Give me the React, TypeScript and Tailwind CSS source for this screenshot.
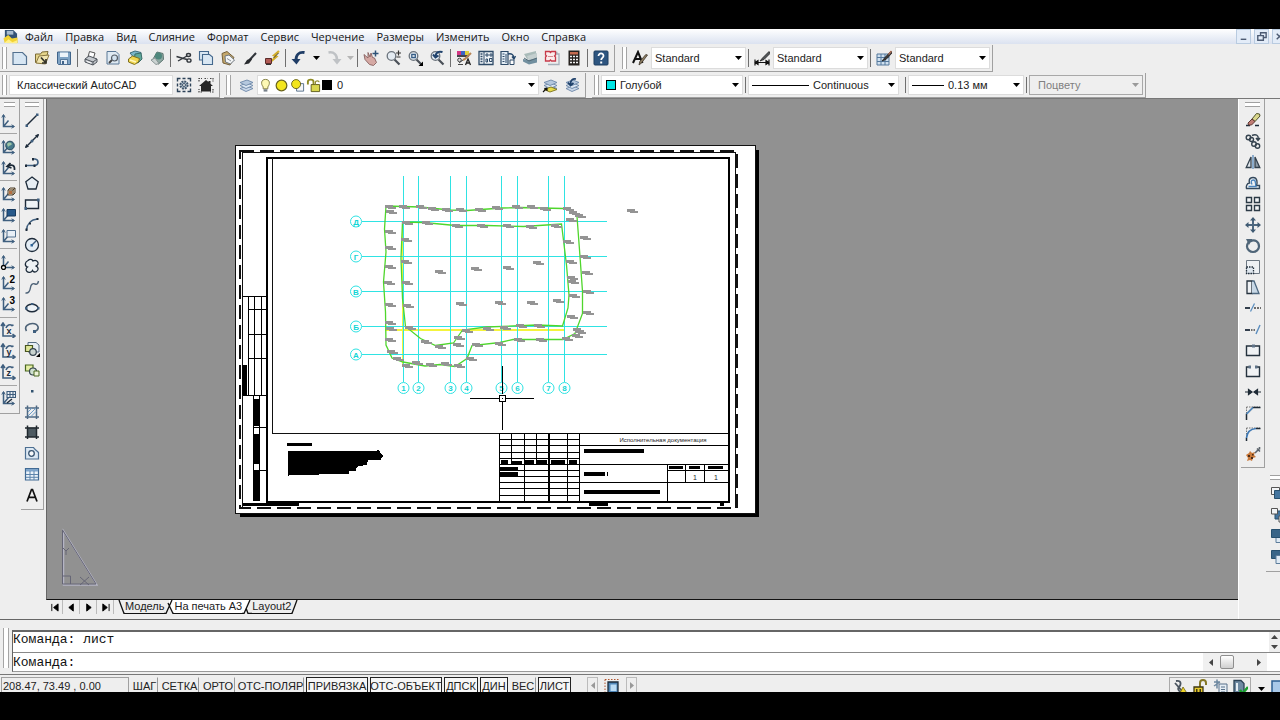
import React from 'react';

type Art = Record<string, React.ReactNode>;

const steel = '#3f5f7f';
const ink = '#1d2b3a';

const axes = (
  <g fill="none" stroke={steel} strokeWidth="1.5">
    <path d="M3.5 2v11.5H14M3.5 13.5l5-6" />
    <path d="M1.8 4.5 3.5 1.5l1.7 3M11.5 11.8l3 1.7-3 1.7" strokeWidth="1" />
  </g>
);

const layers = (
  <g stroke="#6c87a8" strokeWidth=".9">
    <path d="M2 11.5 9 9l6 2.500-7 3z" fill="#c8d6e8" />
    <path d="M2 8.500 9 6l6 2.500-7 3z" fill="#dbe6f2" />
    <path d="M2 5.500 9 3l6 2.500-7 3z" fill="#b5c8de" />
  </g>
);

const axisLetter = (c: string) => (
  <>
    <g fill="none" stroke={steel} strokeWidth="1.6">
      <path d="M3 2v12h12M1 4l2-3 2 3M12.500 12l2.500 2-2.500 2M6 6c1-3 4-4 6-2.500l1.500-.5" />
    </g>
    <text x="6.500" y="12" fontSize="9" fontWeight="700" fontFamily="Liberation Sans, sans-serif" fill={ink}>{c}</text>
  </>
);

const lens = (
  <>
    <path d="m9.500 9.500 5 5" stroke="#4a5058" strokeWidth="2.200" />
    <circle cx="6.500" cy="6" r="4.300" fill="#e4ebf2" stroke="#6b737c" strokeWidth="1.300" />
  </>
);

const art: Art = {
  new: <path d="M1 2.500h9.500l4 4v8H1z" fill="#d7e6f3" stroke="#53718f" strokeWidth="1.200" />,
  open: (
    <>
      <path d="M1.500 4h5l1.500-2 6-.5-1 4-2.500 8-9-1z" fill="#e5d58b" stroke="#7a6a35" />
      <path d="m5 6 10-1-3.500 9L2 13z" fill="#f1e6b1" stroke="#8b7840" />
      <path d="m7 7.500 5 5.500M12 9v4H8" fill="none" stroke="#33332a" strokeWidth="1.700" />
    </>
  ),
  save: (
    <>
      <path d="M1.500 2h13v12.500h-12l-1-1z" fill="#7fa3c4" stroke="#40648a" />
      <path d="M4 2.500h8V7H4z" fill="#eef4fa" />
      <path d="M4.500 9.500h7v5h-7z" fill="#dfe9f3" stroke="#40648a" strokeWidth=".8" />
      <path d="M6 11h2v3H6z" fill="#40648a" />
    </>
  ),
  print: (
    <>
      <path d="M5 7 6.500 1.500 12 3l-1.500 5" fill="#fff" stroke="#555" />
      <path d="m2 9 4-3 8 3v3l-4 3-8-3z" fill="#c4c8cd" stroke="#4d535a" />
      <path d="m2 9 8 3 4-3M10 12v3" fill="none" stroke="#4d535a" />
      <path d="m4 11.500 4 1.500" stroke="#fff" />
    </>
  ),
  preview: (
    <>
      <path d="M2 1.500h9l3 3V14H2z" fill="#dfeaf3" stroke="#5a7896" />
      <path d="m4 13 3-3" stroke="#444" strokeWidth="2" />
      <circle cx="9.500" cy="8" r="3" fill="#d2e2ef" stroke="#555e68" strokeWidth="1.200" />
    </>
  ),
  publish: (
    <>
      <path d="M3 3 8 1l6 1.500-1 5L8 9z" fill="#79b6c9" stroke="#3c6c7c" />
      <path d="m8 4 6-1 1 6-4 4-4-2z" fill="#5ea79a" stroke="#3a6c68" />
      <path d="m1.500 9 4-3 7 2.500-1 3.500-4 2.500-6-2.500z" fill="#f0d64f" stroke="#80701d" />
      <path d="m3 10 6 2" stroke="#fff6bd" strokeWidth="1.500" />
    </>
  ),
  dwf: (
    <>
      <path d="m8 2 6 1.500.5 6-5 4.500-6-4z" fill="#8fa9a3" stroke="#5d7570" />
      <circle cx="9.500" cy="6" r="3.500" fill="#4e877c" />
      <path d="m2 10 4-2 4 5.500-3 1z" fill="#cbd3d2" stroke="#8a9696" />
    </>
  ),
  cut: (
    <g fill="none" stroke="#31363c" strokeWidth="1.400">
      <path d="M.5 6.500 11 9.500M2 11l9-5" />
      <ellipse cx="12.500" cy="5" rx="2" ry="1.500" />
      <ellipse cx="13" cy="10.500" rx="2" ry="1.600" />
    </g>
  ),
  copy: (
    <g fill="#d9e7f3" stroke="#44688d" strokeWidth="1.100">
      <path d="M1.500 1.500h9V10h-9z" />
      <path d="M4.500 4.500h7l3 2.500v7.500h-10z" />
    </g>
  ),
  paste: (
    <>
      <path d="m2 3.500 5-2 7 6L10 15l-7-2z" fill="#c4a76b" stroke="#75603a" />
      <path d="m5 6 4-1 5.500 5-4 4-5-2z" fill="#f3f5f6" stroke="#6f7780" />
      <path d="m7 8.500 4 2.500" stroke="#8c949c" />
    </>
  ),
  brush: (
    <>
      <path d="M14 3 8 9.500" stroke="#30343a" strokeWidth="2" />
      <path d="M9 8 5 10l-3 4.500 5-1 3-4z" fill="#272a2e" />
    </>
  ),
  match: (
    <>
      <path d="m15 1-5 4.500 2.500 1L7.500 11" fill="none" stroke="#d3ae2b" strokeWidth="2.200" />
      <path d="m14.500 3-5 5" stroke="#4a4021" strokeWidth="1" />
      <path d="M1.500 8.500h6v5h-6z" fill="#b05a55" stroke="#5c2c2a" />
      <path d="M2 14.500h5" stroke="#333" />
    </>
  ),
  undo: (
    <>
      <path d="M13.500 2.500C8 1.500 4.500 5 5 11" fill="none" stroke="#1f3d66" strokeWidth="2.800" />
      <path d="M.5 9h9L5.500 14.500z" fill="#1f3d66" />
    </>
  ),
  redo: (
    <>
      <path d="M2.500 2.500C8 1.500 11.500 5 11 11" fill="none" stroke="#bfc2c5" strokeWidth="2.400" />
      <path d="M6.500 9h9l-4.500 5.500z" fill="#bfc2c5" />
    </>
  ),
  pan: (
    <>
      <path d="M1 4.500 5 8V2.500l2 4.500 1-4 1.500 4.500 2 .5 2 4.500-3 3-4-1-4.500-5z" fill="#d5a9a4" stroke="#86605f" strokeWidth=".9" />
      <path d="M9.500 3.500h6M12.500.5v6" stroke="#2d5278" strokeWidth="1.500" />
    </>
  ),
  zoom: <>{lens}<path d="M11 3h5M13.500.5v5M11.500 7h4" stroke="#333" strokeWidth="1.200" /></>,
  zoomwin: (
    <>
      {lens}
      <path d="M4.800 4.500h3.500v3H4.800z" fill="#fff" stroke="#355d86" strokeWidth="1.300" />
      <path d="M16 11.500V16h-4.500z" fill="#000" />
    </>
  ),
  zoomprev: <>{lens}<path d="M13.500 2C10 1 7 2 6.500 6M4 4.500l2.500 3 3-2" fill="none" stroke="#1f416b" strokeWidth="2" /></>,
  props: (
    <>
      <path d="M1 1h4v4H1z" fill="#d33682" /><path d="M5 1h4v4H5z" fill="#3b64c8" />
      <path d="M9 1h4v4H9z" fill="#e0cf3b" /><path d="M1 5h12v2H1z" fill="#44434b" />
      <path d="m15 3-6 6-2 1" fill="none" stroke="#b78556" strokeWidth="2" />
      <circle cx="3.500" cy="10" r="1.800" fill="#ddd" stroke="#444" />
      <path d="M2 14.500h5M3 13l4-3" stroke="#444" />
      <path d="m9.500 15 2.500-6 2.500 6M10.500 13h3" fill="none" stroke="#222" strokeWidth="1.300" />
    </>
  ),
  design: (
    <>
      <path d="M1 1.500h14v13H1z" fill="#eef3f7" stroke="#2f4b68" strokeWidth="1.300" />
      <path d="M6 2v12.500" stroke="#2f4b68" />
      <path d="M2.500 4h2M2.500 6.500h2M2.500 9h2M2.500 11.500h2" stroke="#2f4b68" strokeWidth="1.300" />
      <path d="M8 4h2v2H8zM12 4h2v2h-2zM8 9h1.500v3H8zM11.500 8.500h2.500v3h-2.500z" fill="none" stroke="#2f4b68" />
    </>
  ),
  palette: (
    <>
      <path d="M1 1.500h7v13H1z" fill="#e3edf5" stroke="#2f4b68" strokeWidth="1.200" />
      <path d="M2.500 4h2M2.500 6.500h2M2.500 9h2M2.500 11.500h2M6 4v9" stroke="#2f4b68" />
      <path d="M8 4c4-1 5.500 1 6 4M12 6.500l2 2.500 1.500-3" fill="none" stroke="#26486c" strokeWidth="1.300" />
      <path d="M10 10h4v4.500h-4z" fill="#fff" stroke="#2f4b68" />
    </>
  ),
  sheets: (
    <>
      <path d="m2 4 12-3v5l-9 3z" fill="#a9bbb9" />
      <path d="m5 6 10-3v5l-8 3z" fill="#c4cfcf" />
      <path d="m1 9 6 1 8-2v4.500l-8 2-6-3z" fill="#718f9f" />
      <path d="m2 8 5 3 8-3" fill="none" stroke="#546b78" />
    </>
  ),
  markup: (
    <>
      <path d="M5 4h10v10.500H4M6.500 2.500h7" fill="none" stroke="#a6b0ba" strokeWidth="1.300" />
      <path d="M1.500 1.500h4l1 1 1-1h4v3.500l-1 1 1 1v4h-4l-1-1-1 1h-4v-4l1-1-1-1z" fill="#fbecec" stroke="#c73a49" strokeWidth="1.300" />
      <path d="M4 6.500h5" stroke="#d68a92" />
    </>
  ),
  calc: (
    <>
      <path d="M2.500.5h11v15h-11z" fill="#26221f" />
      <path d="M4 2h8v2.500H4z" fill="#c56b4f" />
      <path d="M4 6.500h8M4 9.500h8M4 12.500h8" stroke="#f2f2f2" strokeWidth="1.700" strokeDasharray="2 1" />
    </>
  ),
  help: (
    <>
      <rect x="1" y="1" width="14" height="14" rx="1" fill="#2d5580" stroke="#1e3e61" />
      <path d="M5.500 6c0-3.500 5.200-3.300 5 0-.2 2-2.300 1.800-2.300 4" fill="none" stroke="#fff" strokeWidth="1.800" />
      <path d="M7.200 11.500h2v2h-2z" fill="#fff" />
    </>
  ),
  textstyle: (
    <>
      <path d="M1 13 6 2l4.500 11M3 9h6" fill="none" stroke="#111" strokeWidth="2" />
      <path d="m15.500 5-6 8-2.500 2 .8-3.500 6-7z" fill="#8c7c62" stroke="#3c3529" strokeWidth=".8" />
    </>
  ),
  dimstyle: (
    <>
      <path d="M1 9.500v6M15 9.500v6M2 12.500h12M1 12.500l3-2v4zM15 12.500l-3-2v4z" fill="#111" stroke="#111" strokeWidth="1.200" />
      <path d="M15 1.500 8.500 8 6 11l4-1.500 6-6z" fill="#53575b" stroke="#222" strokeWidth=".8" />
    </>
  ),
  tablestyle: (
    <>
      <path d="M1 4h12v11H1z" fill="#cfe0ef" stroke="#54789c" />
      <path d="M1 7.500h12M1 11.500h12M5 4v11M9 4v11" stroke="#54789c" />
      <path d="M15 1 8.500 8 6 11l4-1.500L16 3z" fill="#3d3a38" stroke="#222" strokeWidth=".8" />
      <path d="m15.500 1-3 3.500" stroke="#b0715a" strokeWidth="1.500" />
    </>
  ),
  gear: (
    <>
      <path d="M1.500 4.500v-3h3M11.500 1.500h3v3M14.500 11.500v3h-3M4.500 14.500h-3v-3M6.500 1.500h3M6.500 14.500h3M1.500 6.500v3M14.500 6.500v3" fill="none" stroke="#2c4258" strokeWidth="1.400" />
      <circle cx="8" cy="8" r="3.600" fill="#b5c4d1" stroke="#41566b" strokeWidth="2" strokeDasharray="1.900 .9" />
      <circle cx="8" cy="8" r="1.500" fill="#eee" stroke="#41566b" />
    </>
  ),
  home: (
    <>
      <path d="M1 4.500V1.500h3M12 1.500h3v3M15 12v3h-3M4 15H1v-3M6.500 1.500h3" fill="none" stroke="#444" strokeWidth="1.200" strokeDasharray="1.500 1" />
      <path d="M8 3 1 9h2v5.500h10V9h2l-2.500-2.200V4h-2v1z" fill="#262626" />
    </>
  ),
  layers,
  layerprops: <>{layers}<path d="M2 12.500 9 10l6 2.500-7 2.500z" fill="#e7dc4b" stroke="#887e25" /><path d="m1 15 4-4M2.500 11.500H5v2.500" fill="none" stroke="#111" strokeWidth="1.100" /></>,
  layerprev: <>{layers}<path d="M12 2C8.500 1.500 6.500 3 6.500 7M4 5.500l2.500 3 3-2.500" fill="none" stroke="#1f416b" strokeWidth="1.700" /></>,
  bulb: (
    <>
      <path d="M8 1.500c-5 0-5 5-2.500 8v2h5v-2C13 6.500 13 1.500 8 1.500z" fill="#fdf9b4" stroke="#807c3f" />
      <path d="M6 12h4v2.500H6z" fill="#77808a" />
    </>
  ),
  sun: <circle cx="8" cy="8" r="5.700" fill="#f3e51d" stroke="#6a641c" strokeWidth="1.300" />,
  sunvp: <><path d="M7 6h7.500v8H7z" fill="#f4f6f8" stroke="#56708c" /><circle cx="6.500" cy="6.500" r="4.800" fill="#f3e51d" stroke="#6a641c" /></>,
  lock: (
    <>
      <path d="M2 7V4c0-3 6-3 6 0v3" fill="none" stroke="#8f8b24" strokeWidth="2" />
      <path d="M5.500 7h9v7.500h-9z" fill="#d9d74f" stroke="#5e5c1d" />
      <path d="M10 7V4.500c0-2 4-2 4 0" fill="none" stroke="#8f8b34" strokeWidth="1.300" />
    </>
  ),
  ucs: axes,
  ucsworld: <>{axes}<circle cx="10" cy="6.500" r="4.300" fill="#47798a" stroke="#28495c" /><path d="M7 5c2-2.500 4-1.500 5 0-1 2-3 1-4 3z" fill="#9dc5a6" /></>,
  ucsprev: <>{axes}<path d="M14.500 10C15 5.500 12 4 8.500 6M10.500 3 7 6.500l4.500 1.500" fill="none" stroke="#1c2a38" strokeWidth="1.700" /></>,
  ucsface: <>{axes}<path d="m8 4 2-2h5v5l-2 2H8z" fill="#e9d9bd" stroke="#4a3c2b" /><path d="M8 4h5v5M13 4l2-2" fill="none" stroke="#4a3c2b" /><path d="M9 5h3v3H9z" fill="#b46e40" /></>,
  ucsobject: <>{axes}<path d="M7 2.500h8.500v6.500H7z" fill="#27598a" stroke="#17395c" /></>,
  ucsview: <>{axes}<path d="M7 2.500h8.500v6.500H7z" fill="#e8eff6" stroke="#53718f" /></>,
  ucsorigin: <>{axes}<circle cx="3.500" cy="13.500" r="2" fill="#fff" stroke="#000" strokeWidth="1.300" /></>,
  ucsz: <>{axes}<text x="9.500" y="7.500" fontSize="10" fontWeight="700" fontFamily="Liberation Sans, sans-serif">2</text></>,
  ucs3: <>{axes}<text x="9.500" y="7.500" fontSize="10" fontWeight="700" fontFamily="Liberation Sans, sans-serif">3</text></>,
  ucsX: axisLetter('x'),
  ucsY: axisLetter('y'),
  ucsZ: axisLetter('z'),
  ucsapply: <>{axes}<path d="M7 1.500h8.500v6H7zM7 4.500h8.500M10 1.500v6M13 1.500v6" fill="#e9eff5" stroke="#3c5c7c" strokeWidth="1.100" /><path d="m7 13 5-4" stroke={ink} strokeWidth="1.500" /></>,
  line: <><path d="m2.500 13.500 11-11" stroke={ink} strokeWidth="1.400" /><path d="M1.500 12.500h2.500V15H1.500zM12 1.500h2.500V4H12z" fill={steel} /></>,
  xline: <><path d="m1.500 14.500 13-13" stroke={ink} strokeWidth="1.500" /><path d="m1 15 1.200-4L5 13.800zM15 1l-1.200 4L11 2.200z" fill={ink} /><circle cx="8" cy="8" r="1.500" fill={steel} /></>,
  pline: <><path d="M2 11.500h9c4-.5 4-6 0-6.500H9" fill="none" stroke={steel} strokeWidth="1.600" /><path d="M1 10.500h2v2.500H1zM8 4h2v2.500H8zM9.500 10.500h2v2.500h-2z" fill={ink} /></>,
  polygon: <path d="m8 2 6.200 4.800L12 14H4L1.800 6.800z" fill="#e6edf3" stroke={ink} strokeWidth="1.300" />,
  rect: <><path d="M1.500 4h13v8.500h-13z" fill="#edf2f6" stroke={ink} strokeWidth="1.400" /><path d="M.5 11h2.500v3H.5zM13 2.500h2.500v3H13z" fill={steel} /></>,
  arc: <><path d="M2.500 14C3 8 7 3.500 13.500 3" fill="none" stroke={steel} strokeWidth="1.600" /><path d="M1.500 12.500h2v2.500h-2zM5 6.500h2v2H5zM12.500 2h2v2h-2z" fill={ink} /></>,
  circle: <><circle cx="8" cy="8" r="6.500" fill="#e4edf5" stroke={ink} strokeWidth="1.300" /><path d="m8 8 4-4" stroke={steel} strokeWidth="1.500" /><path d="M6.500 7H9v2.500H6.500z" fill="#2e6498" /></>,
  cloud: <path d="M4 2.500c2-2 4.500-1 5 .5 3-1.500 5.500.5 5 3-.5 1.500-1.500 2-2.500 2 3 .5 3.500 4 1 5.500-2 1-3.500 0-4-1-1 2-4 2.500-5.500 1-1.500-1.500-1-3.500.5-4.500C.5 8 .5 4 4 2.500z" fill="#eef2f5" stroke={ink} strokeWidth="1.300" />,
  spline: <path d="M1.500 14c3 .5 4.500-2 5-5.500S9 4 11 5s3-.5 3.500-3" fill="none" stroke="#4d6277" strokeWidth="1.400" />,
  ellipse: <><ellipse cx="8" cy="8" rx="6" ry="3.700" fill="#edf2f6" stroke={ink} strokeWidth="1.500" /><path d="M1 7h2.500v2.500H1zM13 7h2.500v2.500H13zM7 3h2.500v2H7z" fill={steel} /></>,
  ellipsearc: <><path d="M2.500 11C-.5 6 5 3.500 8.500 3.500c6 0 8 6 2 8" fill="none" stroke="#4d6277" strokeWidth="1.600" /><path d="M9 10h3v3H9z" fill={steel} /></>,
  insert: <><path d="M4 1.500h8l3 2.500v7H4z" fill="#e6edf4" stroke="#566d84" /><path d="M1.500 4.500h7v6h-7z" fill="#dfe79a" stroke="#49561e" strokeWidth="1.200" /><circle cx="9" cy="11" r="3.300" fill="#c9d3cf" stroke="#34434f" strokeWidth="1.200" /><path d="M16 12v4h-4z" fill="#000" /></>,
  block: <><path d="M1.500 3h7.500v6H1.500z" fill="#e5efa5" stroke="#49661e" strokeWidth="1.200" /><circle cx="9" cy="9.500" r="3.500" fill="#cfe0cf" stroke="#34434f" strokeWidth="1.200" /><path d="M10 9h5v5h-5z" fill="#eef3da" stroke="#49661e" /></>,
  point: <path d="M7 7h2.500v2.500H7z" fill="#31526f" />,
  hatch: <><path d="M1 4h14M1 13h14M3.500 1.500v13.500M12.500 1.500v13.500" stroke="#4f6a84" strokeWidth="1.500" /><path d="m4 8 4-4M4 12l8-8M7 12.500l5-5" stroke="#6c9cc8" /></>,
  gradient: <><path d="M3 3.500h10v9.500H3z" fill="#4d5a61" /><path d="M1 4h14M1 13h14M3.500 1.500v13.500M12.500 1.500v13.500" stroke="#20282e" strokeWidth="1.500" /></>,
  region: <><path d="M1.500 2.500h8c1 2 2 2 5 5V14h-13z" fill="#dce8f3" stroke="#4d6f92" strokeWidth="1.200" /><circle cx="7.500" cy="8.500" r="2.800" fill="#f6f8fa" stroke="#3a5571" strokeWidth="1.300" /></>,
  table: <><path d="M1.500 2.500h13v11.500h-13z" fill="#eaf2f9" stroke="#416a94" strokeWidth="1.200" /><path d="M2 3h12v2.500H2z" fill="#7ea4ca" /><path d="M2 8.500h12M2 11.300h12M6 5v9M10 5v9" stroke="#5c84ac" /></>,
  text: <path d="M3 14.500 7.500 2.500h1L13 14.500M4.800 10.300h6.500" fill="none" stroke="#111" strokeWidth="1.700" />,
  erase: <><path d="M1 13.500h4M10 13.500h4" stroke={ink} strokeWidth="1.400" /><path d="m14.500 2-3-.5L7 7l3 2.500L15 4z" fill="#d9d68c" stroke="#50522b" /><path d="m7 7 3 2.500L6.500 13H3.500L3 11z" fill="#c07c74" stroke="#5d3833" /></>,
  copyobj: <g fill="none" stroke="#35434f" strokeWidth="1.400"><circle cx="3.500" cy="4.500" r="2.300" /><circle cx="6.500" cy="6.500" r="2" /><path d="M7 2.500c4-2 7 0 6 4M11 5l2 2.500L15 5" /><circle cx="9" cy="11" r="2.300" /><circle cx="12.500" cy="13" r="2.200" /></g>,
  mirror: <><path d="M6 3v10.500H1.200z" fill="#dfe5ea" stroke="#33414e" strokeWidth="1.300" /><path d="M10 3v10.500h4.800z" fill="#8c9aa6" stroke="#33414e" strokeWidth="1.300" /><path d="M8 1v14" stroke="#4c82b8" strokeWidth="1.200" /></>,
  offset: <><path d="M1.500 13.500h13v-3h-3c1-3 1-8-3.500-8s-4 4-3.500 5.500c-3 0-3.500 4-3 5.500z" fill="#eef2f5" stroke="#33485c" strokeWidth="1.400" /><path d="M3.500 11.500h7.500c-1-2 .5-6.500-2.500-6.500S6 7 7 9.500" fill="none" stroke="#4b84bd" strokeWidth="1.300" /></>,
  array: <path d="M1.500 1.500h5v5h-5zM9.500 1.500h5v5h-5zM1.500 9.500h5v5h-5zM9.500 9.500h5v5h-5z" fill="#f4f6f8" stroke="#2c3a46" strokeWidth="1.400" />,
  move: <><path d="M8 2.500v11M2.500 8h11" stroke="#4d6880" strokeWidth="2" /><path d="m8 0 3 3.500H5zM8 16l3-3.500H5zM0 8l3.500-3v6zM16 8l-3.500-3v6z" fill="#3f5a72" /></>,
  rotate: <><path d="M5 3.500C10 .5 14 4 14 8.500c0 3-3 5.500-6 5.500s-6-2.500-6-5.500c0-1.500.5-3 1.500-4" fill="none" stroke="#4f6578" strokeWidth="2.200" /><path d="M1 1h6.500L4 7z" fill="#4f6578" /></>,
  scale: <><path d="M1.500 1.500h13v13h-13z" fill="#eef1f4" stroke="#6c7782" /><path d="M1.500 8h7v6.500h-7z" fill="#dfe7ef" stroke="#25323e" strokeWidth="1.300" strokeDasharray="1.500 1" /></>,
  stretch: <><path d="M2 2h5v12.500H2z" fill="#eef1f4" stroke="#25323e" strokeWidth="1.300" /><path d="M7 2h2l5 12.500H7" fill="#c8d8e6" stroke="#4d6880" strokeWidth="1.300" /></>,
  trim: <><path d="M0 8h5" stroke={ink} strokeWidth="1.800" /><path d="m5.500 11.500 4-8" stroke="#5b8ec0" strokeWidth="1.300" /><path d="M9 8h7" stroke="#444" strokeWidth="1.300" strokeDasharray="2 1" /></>,
  extend: <><path d="M0 9h5" stroke={ink} strokeWidth="1.800" /><path d="M6 9h4" stroke="#444" strokeWidth="1.300" strokeDasharray="1.500 1" /><path d="m11 13 4-9" stroke="#5b8ec0" strokeWidth="1.400" /></>,
  breakpt: <><path d="M1.500 4h13v9.500h-13z" fill="#f0f2f4" stroke="#25323e" strokeWidth="1.400" /><path d="M7 2.500h3v3H7z" fill="#5f7388" /></>,
  break: <><path d="M4 4H1.500v9.500h13V4H12" fill="#f0f2f4" stroke="#25323e" strokeWidth="1.400" /><path d="M3.500 2.500H6v3H3.500zM10 2.500h2.500v3H10z" fill="#5f7388" /></>,
  join: <path d="M0 8h5M11 8h5M3.500 5.500 7 8l-3.500 2.500zM12.500 5.500 9 8l3.500 2.500z" fill="#1e2a35" stroke="#1e2a35" strokeWidth="1.200" />,
  chamfer: <><path d="M1.500 2v13M1.500 2H15" stroke="#777" strokeDasharray="1.500 1" /><path d="M1.500 15V9L8 2.500h7.500" fill="none" stroke="#1e2a35" strokeWidth="1.500" /><path d="M1.500 9 8 2.500" stroke="#5b94cc" strokeWidth="1.500" /></>,
  fillet: <><path d="M1.500 2v13M1.500 2H15" stroke="#777" strokeDasharray="1.500 1" /><path d="M1.500 15v-3M11 2.500h4.500" stroke="#1e2a35" strokeWidth="1.500" /><path d="M1.500 12C2 6 5 3 11 2.500" fill="none" stroke="#3f79b4" strokeWidth="1.700" /></>,
  explode: <><path d="m1 9 3-2 1-2 2 2 3-1-1 3 2 2-3 1-1 3-2-1-3 1 1-3z" fill="#c97a3c" /><path d="M3 9h2v2H3zM6 11h2v2H6zM7 8h1.500v1.500H7z" fill="#4a2c18" /><path d="m10 7 4-4M12 2.500l3 3M14.500 1v2.500" stroke="#5c646c" strokeWidth="1.600" /></>,
  front: <><path d="M1.500 1.500h8v7h-8z" fill="#f2f4f6" stroke="#555" /><path d="M4.500 4.500h10v8h-10z" fill="#44759f" stroke="#27506f" /></>,
  back: <><path d="M5 4h9v8H5z" fill="#44759f" stroke="#27506f" /><path d="M1.500 1.500h6v5.500h-6zM9 9h6v6H9z" fill="#f2f4f6" stroke="#555" /></>,
  above: <><path d="M6 7h9v7.500H6z" fill="#dfeaf4" stroke="#5d7d9b" /><path d="M1.500 1.500h12v8h-12z" fill="#396588" stroke="#27506f" /></>,
  under: <><path d="M1.500 1.500h12v8h-12z" fill="#396588" stroke="#27506f" /><path d="M6 6.500h9v8H6z" fill="#dfeaf4" stroke="#5d7d9b" /></>,
  viewport: <><path d="M1 1.500h14M1 1.500v13" stroke="#b0542e" strokeDasharray="1.500 1.500" /><path d="M4 4h10v11H4z" fill="#4f86b8" stroke="#1d2b3a" strokeWidth="1.300" /><path d="M6.500 6.500h6V13h-6z" fill="#bcdcf4" /></>,
  tray1: <><path d="M4 2c6-1 5 4 3 6s0 5 4 6M3 4l8 9" fill="none" stroke="#4b5560" strokeWidth="1.800" /><path d="m11 8 4.500 7h-8z" fill="#f0d528" stroke="#6f6212" strokeWidth=".8" /></>,
  tray2: <><path d="M8 8V4c0-4 6-4 6 0v2" fill="none" stroke="#857726" strokeWidth="2" /><path d="M2 8h9v8H2z" fill="#e5c92c" stroke="#3d3610" strokeWidth="1.300" /><path d="M4 10h1.500v5H4zM7.500 10H9v5H7.500z" fill="#3d3610" /></>,
  tray3: <><path d="M2 3h6M5 .5v9M2 7l6-4" stroke="#6e88a0" strokeWidth="1.500" /><path d="M7 5h8v11H7z" fill="#e5edf4" stroke="#58718a" /><path d="M9 8h4M9 10.500h4M9 13h4" stroke="#58718a" /></>,
  tray4: <><path d="M2 1.500h7l3 3V15H2z" fill="#6f8aa3" stroke="#2c4256" strokeWidth="1.300" /><path d="M5 4v8" stroke="#e5edf4" strokeWidth="2" /><path d="m8 11 2.500 3.500L16 8" fill="none" stroke="#18a02c" strokeWidth="2.500" /></>,
  clean: <path d="M1 2h15v13H1z" fill="#a9c9e9" stroke="#2c5f92" strokeWidth="1.500" />,
  app: (
    <>
      <path d="M2 1h9l4 4v10H2z" fill="#335276" />
      <path d="M4 2h7v4H4z" fill="#a8bccf" />
      <path d="m.5 10 5-3.500 4 3.500 6-1v6H2z" fill="#f3d333" />
      <path d="m1 15 5-4 4 3 5-2v3.500z" fill="#ffef8a" />
    </>
  ),
};

function Icon({ name, size = 'size-4' }: { name: string; size?: string }) {
  return (
    <svg viewBox="0 0 16 16" className={`${size} shrink-0`} aria-hidden="true">
      {art[name]}
    </svg>
  );
}

const Tool = ({ name }: { name: string }) => (
  <button type="button" aria-label={name} className="flex w-[22px] shrink-0 items-center justify-center">
    <Icon name={name} />
  </button>
);

const Sep = () => (
  <span className="flex w-[5px] shrink-0 justify-center py-[3px]">
    <span className="w-px bg-[#6f6f6f]" />
  </span>
);

const Grip = () => (
  <span className="mx-[2px] my-px flex w-[5px] shrink-0 border-x border-[#a5a5a5] bg-white" />
);

const Caret = ({ color = '#000000' }: { color?: string }) => (
  <svg viewBox="0 0 7 4" className="pointer-events-none h-1 w-[7px] shrink-0" aria-hidden="true">
    <path d="M0 0h7L3.500 4z" fill={color} />
  </svg>
);

const Bar = ({ children }: { children: React.ReactNode }) => (
  <div className="flex shrink-0 items-stretch border-r border-b border-[#a0a0a0] py-px pr-[2px]">{children}</div>
);

interface ComboProps {
  label: string;
  value: string;
  width: string;
  lead?: React.ReactNode;
  disabled?: boolean;
}

function Combo({ label, value, width, lead, disabled }: ComboProps) {
  return (
    <div
      className={`my-px flex shrink-0 items-center gap-1 border pr-[3px] ${width} ${
        disabled ? 'border-[#a8a8a8] bg-[#efefef] text-[#808080]' : 'border-[#dcdcdc] bg-white text-[#222]'
      }`}
    >
      {lead}
      <select aria-label={label} disabled={disabled} className="min-w-0 flex-1 appearance-none bg-transparent outline-none">
        <option>{value}</option>
      </select>
      <Caret color={disabled ? '#9a9a9a' : '#000000'} />
    </div>
  );
}

function Column({ groups, height }: { groups: string[][]; height: string }) {
  return (
    <div className={`flex flex-col ${height}`}>
      {groups.map((group, i) => (
        <React.Fragment key={i}>
          {i > 0 && (
            <span className="flex h-[5px] shrink-0 items-center">
              <span className="h-px w-full bg-[#a5a5a5]" />
            </span>
          )}
          {group.map((name) => (
            <button key={name} type="button" aria-label={name} className="flex min-h-0 flex-1 items-center justify-center">
              <Icon name={name} />
            </button>
          ))}
        </React.Fragment>
      ))}
    </div>
  );
}

const TopGrip = () => <span className="mx-1 mt-[3px] mb-[3px] block h-[5px] shrink-0 border-y border-[#a0a0a0] bg-white" />;

const menu = ['Файл', 'Правка', 'Вид', 'Слияние', 'Формат', 'Сервис', 'Черчение', 'Размеры', 'Изменить', 'Окно', 'Справка'];

const standardGroups = [
  ['new', 'open', 'save'],
  ['print', 'preview', 'publish', 'dwf'],
  ['cut', 'copy', 'paste', 'brush', 'match'],
];
const viewGroups = [
  ['pan', 'zoom', 'zoomwin', 'zoomprev'],
  ['props', 'design', 'palette', 'sheets', 'markup', 'calc'],
  ['help'],
];
const ucsGroups = [
  ['ucs'],
  ['ucsworld', 'ucsprev'],
  ['ucsface', 'ucsobject', 'ucsview'],
  ['ucsorigin', 'ucsz', 'ucs3'],
  ['ucsX', 'ucsY', 'ucsZ'],
  ['ucsapply'],
];
const drawGroup = [
  ['line', 'xline', 'pline', 'polygon', 'rect', 'arc', 'circle', 'cloud', 'spline', 'ellipse', 'ellipsearc', 'insert', 'block', 'point', 'hatch', 'gradient', 'region', 'table', 'text'],
];
const modifyGroup = [
  ['erase', 'copyobj', 'mirror', 'offset', 'array', 'move', 'rotate', 'scale', 'stretch', 'trim', 'extend', 'breakpt', 'break', 'join', 'chamfer', 'fillet', 'explode'],
];

const columns: [number, string][] = [[403, '1'], [418, '2'], [450, '3'], [466, '4'], [501, '5'], [517, '6'], [548, '7'], [564, '8']];
const rows: [number, string][] = [[221, 'Д'], [256, 'Г'], [291, 'В'], [326, 'Б'], [354, 'А']];

const marks: [number, number][] = [
  [390, 207], [391, 212], [404, 207], [421, 207], [433, 209], [447, 210], [461, 210], [480, 210], [497, 208], [517, 207], [532, 207], [545, 209], [568, 209], [574, 213], [580, 216],
  [390, 232], [390, 248], [390, 267], [389, 283], [390, 305], [390, 323], [391, 329], [390, 340], [392, 352], [398, 359], [407, 366], [417, 363], [431, 365], [446, 364], [459, 366], [471, 359], [477, 345], [500, 344], [519, 340], [541, 340], [567, 339],
  [407, 223], [427, 223], [457, 226], [482, 226], [508, 226], [531, 227], [556, 226], [571, 220], [585, 238], [585, 257], [587, 273], [588, 292], [588, 313],
  [406, 240], [406, 262], [407, 283], [408, 306], [410, 328], [426, 342], [440, 347], [458, 345], [459, 338], [467, 331], [488, 329], [505, 328], [521, 326], [539, 326],
  [568, 242], [571, 262], [572, 278], [573, 282], [574, 296], [572, 317], [578, 330], [580, 332], [577, 336],
  [440, 272], [476, 269], [508, 268], [538, 263], [461, 304], [500, 303], [532, 303], [558, 301], [632, 211],
];

const vLines: [number, number, number, number][] = [
  [248, 297, 395, 1], [254, 297, 395, 1], [261, 297, 395, 1],
  [253, 395, 501, 1], [259, 395, 501, 1],
  [499, 433, 501, 1], [511, 433, 464, 1], [524, 433, 501, 1], [536, 433, 464, 1], [548, 433, 501, 2], [567, 433, 501, 1], [579, 433, 501, 1],
  [667, 464, 501, 1], [685, 464, 482, 1], [704, 464, 482, 1],
];
const hLines: [number, number, number, number][] = [
  [296, 243, 267, 1], [309, 248, 267, 1], [334, 248, 267, 1], [358, 248, 267, 1], [395, 243, 267, 1],
  [427, 253, 267, 1], [470, 253, 267, 1],
  [433, 499, 729, 1], [439, 499, 580, 1], [445, 499, 580, 1], [452, 499, 580, 1], [458, 499, 580, 1], [464, 499, 580, 1],
  [470, 499, 580, 1], [476, 499, 580, 1], [482, 499, 580, 1], [488, 499, 580, 1], [495, 499, 580, 1],
  [445, 580, 729, 1], [464, 580, 729, 1], [470, 667, 729, 1], [482, 580, 729, 1],
];
const fills: [number, number, number, number][] = [
  [242, 365, 5, 30], [254, 399, 5, 27], [254, 434, 5, 30], [254, 471, 5, 30], [243, 503, 56, 3],
  [501, 460, 7, 4], [512, 461, 10, 3], [525, 460, 9, 4], [537, 460, 10, 4], [551, 460, 14, 4], [569, 460, 8, 4],
  [500, 467, 18, 4], [500, 472, 18, 4],
  [584, 449, 60, 4], [584, 472, 21, 4], [607, 472, 1, 4], [584, 490, 76, 4],
  [669, 466, 14, 3], [689, 466, 11, 3], [708, 466, 15, 3],
  [589, 502, 19, 4], [720, 502, 4, 4], [287, 443, 25, 3],
];

function Sheet() {
  return (
    <svg viewBox="235 145 525 373" className="h-[373px] w-[525px] shrink-0" role="img" aria-label="На печать А3" shapeRendering="crispEdges" fontFamily="Liberation Sans, sans-serif">
      <path d="M240 150h519v367H240z" fill="#000" />
      <rect x="235.500" y="145.500" width="520" height="368" fill="#fff" stroke="#111" />
      <path d="M240 151h497v357H240z" fill="none" stroke="#111" strokeWidth="2" strokeDasharray="14 6" />
      <path d="M243 152.500h492V508" fill="none" stroke="#111" />
      <path d="M242.500 152v356" stroke="#111" />
      <path d="M267 158h462v343.500H267z" fill="none" stroke="#000" strokeWidth="2" />
      <path d="M272.500 158v275H729" fill="none" stroke="#111" />
      {vLines.map(([x, a, b, w], i) => <rect key={i} x={x} y={a} width={w} height={b - a} />)}
      {hLines.map(([y, a, b, w], i) => <rect key={i} x={a} y={y} width={b - a} height={w} />)}
      {fills.map(([x, y, w, h], i) => <rect key={i} x={x} y={y} width={w} height={h} />)}
      <path d="M288 451h88l2-1 2 2 3 4-2 2v2h-13l-1 5-9 1-2 2v3h-7v3l-60 1v1h-1z" />
      <g fontSize="7" fill="#222">
        <text x="663" y="442" textAnchor="middle" fontSize="6">Исполнительная документация</text>
        <text x="693" y="480">1</text>
        <text x="714" y="480">1</text>
      </g>
      <g stroke="#f4f43c" strokeWidth="2">
        <path d="M385 330h179M403 222v142" />
      </g>
      <g stroke="#2fe3e3">
        {columns.map(([x]) => <path key={x} d={`M${x + 0.5} 176v206`} />)}
        {rows.map(([y]) => <path key={y} d={`M362 ${y + 0.5}h245`} />)}
      </g>
      <g shapeRendering="geometricPrecision" fill="none" stroke="#2fe3e3">
        {columns.map(([x]) => <circle key={x} cx={x + 0.5} cy="388" r="5.500" />)}
        {rows.map(([y]) => <circle key={y} cx="356" cy={y + 0.5} r="5.500" />)}
      </g>
      <g fill="#12d5d5" fontSize="8" fontWeight="700" textAnchor="middle">
        {columns.map(([x, t]) => <text key={t} x={x + 0.5} y="391">{t}</text>)}
        {rows.map(([y, t]) => <text key={t} x="356" y={y + 3.5}>{t}</text>)}
      </g>
      <g fill="none" stroke="#4fd62c" strokeWidth="1.300" shapeRendering="geometricPrecision">
        <path d="m386 206 34 1 30 3 17 .5 35-2.500 18-.5 43 1c10 2 13 4 14 8l3 40 2.500 35v22l-7.500 20-12 6h-50l-13 3-28 3-5 13-12 8-15-2-15 1.500-22-4-11-4-6-13-.5-33-2-30 2.500-30-1.500-23z" />
        <path d="m402.500 222 21 .5 32 3h31l37 1 38-2.500 5 41 2.500 30-1 13-5.500 18-26-1-50 2-24 3-9 13-18 2.500-15-7-15-12-3-28-1.500-40z" />
      </g>
      <g fill="#949494">
        {marks.map(([x, y], i) => (
          <path key={i} d={`M${x - 5} ${y - 2}h8v2h3v2h-8v-1h-3z`} />
        ))}
      </g>
      <path d="M502.500 366v28M502.500 401v29M470 398.500h29M506 398.500h28" stroke="#000" />
      <path d="M499.500 395.500h6v6h-6z" fill="none" stroke="#000" />
      <path d="M502 398h1v1h-1z" />
    </svg>
  );
}

const TabEdge = ({ d, fill = 'none', wide }: { d: string; fill?: string; wide?: boolean }) => (
  <svg viewBox={wide ? '0 0 10 14' : '0 0 7 14'} className={`h-[14px] shrink-0 ${wide ? 'w-[10px]' : 'w-[7px]'}`} aria-hidden="true">
    {fill !== 'none' && <path d={fill} fill="#fff" />}
    <path d={d} fill="none" stroke="#111" strokeWidth="1.300" />
  </svg>
);

const navPaths = ['M2 1v8M9 1v8L4 5z', 'M7 1v8L2 5z', 'M3 1v8l5-4z', 'M9 1v8M2 1v8l5-4z'];
const navNames = ['Первый лист', 'Предыдущий лист', 'Следующий лист', 'Последний лист'];

const modes: { t: string; on: boolean; w: string }[] = [
  { t: 'ШАГ', on: false, w: 'w-[27px]' },
  { t: 'СЕТКА', on: false, w: 'w-[39px]' },
  { t: 'ОРТО', on: false, w: 'w-[34px]' },
  { t: 'ОТС-ПОЛЯР', on: false, w: 'w-[67px]' },
  { t: 'ПРИВЯЗКА', on: true, w: 'w-[62px]' },
  { t: 'ОТС-ОБЪЕКТ', on: true, w: 'w-[72px]' },
  { t: 'ДПСК', on: true, w: 'w-[34px]' },
  { t: 'ДИН', on: true, w: 'w-[28px]' },
  { t: 'ВЕС', on: false, w: 'w-[26px]' },
  { t: 'ЛИСТ', on: true, w: 'w-[33px]' },
];

export default function App() {
  return (
    <div className="flex min-h-screen flex-col overflow-hidden bg-black pt-[29px] pb-7 font-['Liberation_Sans',sans-serif] text-[11px] leading-none text-[#222]">
      <header className="flex h-[15px] shrink-0 items-center bg-linear-to-b from-white to-[#dbe2f0] font-['Open_Sans','Noto_Sans',sans-serif] text-[11px] text-[#151515]">
        <span className="ml-[3px] flex w-[22px] shrink-0">
          <Icon name="app" size="size-[15px]" />
        </span>
        <nav className="flex flex-1 gap-3">
          {menu.map((m) => (
            <button key={m} type="button">{m}</button>
          ))}
        </nav>
        <div className="-mr-[7px] flex h-full gap-[3px]">
          {['M4 10h6', 'M3 6h6v5H3zM6 6V3h6v5H9', 'm4 4 6 6m0-6-6 6'].map((d, i) => (
            <button key={d} type="button" aria-label={['Свернуть', 'Восстановить', 'Закрыть'][i]} className="flex w-[15px] items-center justify-center border border-[#b9cbe0] bg-[#e3ecf8]">
              <svg viewBox="0 0 14 14" className="size-[13px]" aria-hidden="true">
                <path d={d} fill="none" stroke="#4d5b73" strokeWidth="1.500" />
              </svg>
            </button>
          ))}
        </div>
      </header>

      <div className="flex h-[28px] shrink-0 bg-[#eeeeee] pt-px">
        <Bar>
          <Grip />
          {standardGroups.map((g, i) => (
            <React.Fragment key={i}>
              {g.map((n) => <Tool key={n} name={n} />)}
              <Sep />
            </React.Fragment>
          ))}
          <Tool name="undo" />
          <button type="button" aria-label="Список отмены" className="flex w-[13px] items-center justify-center"><Caret /></button>
          <Tool name="redo" />
          <button type="button" aria-label="Список повтора" className="flex w-[10px] items-center justify-center"><Caret color="#b5b5b5" /></button>
          {viewGroups.map((g, i) => (
            <React.Fragment key={i}>
              <Sep />
              {g.map((n) => <Tool key={n} name={n} />)}
            </React.Fragment>
          ))}
        </Bar>
        <div className="w-[5px]" />
        <Bar>
          <Grip />
          <Tool name="textstyle" />
          <Combo label="Текстовый стиль" value="Standard" width="w-[95px] pl-[3px]" />
          <Sep />
          <Tool name="dimstyle" />
          <Combo label="Размерный стиль" value="Standard" width="w-[95px] pl-[3px]" />
          <Sep />
          <Tool name="tablestyle" />
          <Combo label="Стиль таблиц" value="Standard" width="w-[95px] pl-[3px]" />
        </Bar>
      </div>

      <div className="flex h-[27px] shrink-0 border-b border-[#777] bg-[#eeeeee] pt-px">
        <Bar>
          <Grip />
          <Combo label="Рабочее пространство" value="Классический AutoCAD" width="w-[164px] pl-[7px]" />
          <Tool name="gear" />
          <Tool name="home" />
        </Bar>
        <div className="w-1" />
        <Bar>
          <Grip />
          <span className="w-[2px]" />
          <Tool name="layers" />
          <Combo
            label="Слой"
            value="0"
            width="w-[282px]"
            lead={
              <span className="flex items-center gap-px">
                <Icon name="bulb" size="size-[15px]" />
                <Icon name="sun" size="size-[15px]" />
                <Icon name="sunvp" size="size-[15px]" />
                <Icon name="lock" size="size-[15px]" />
                <span className="mr-px size-[10px] bg-black" />
              </span>
            }
          />
          <Tool name="layerprops" />
          <Tool name="layerprev" />
        </Bar>
        <div className="w-[6px]" />
        <Bar>
          <Grip />
          <Combo label="Цвет" value="Голубой" width="w-[142px] pl-1" lead={<span className="size-[10px] border border-black bg-[#00e5e5]" />} />
          <Sep />
          <Combo label="Тип линии" value="Continuous" width="w-[151px] pl-[3px]" lead={<span className="h-px w-[57px] bg-black" />} />
          <span className="w-1" />
          <Sep />
          <Combo label="Вес линии" value="0.13 мм" width="w-[116px] pl-[3px]" lead={<span className="h-px w-[32px] bg-black" />} />
          <Sep />
          <Combo label="Стиль печати" value="Поцвету" width="w-[114px] pl-[8px]" disabled />
        </Bar>
      </div>

      <main className="flex flex-1 bg-[#eeeeee]">
        <aside className="flex w-[46px] shrink-0 items-start gap-px">
          <div className="w-5 border-r border-b border-[#a0a0a0] pb-1">
            <TopGrip />
            <div className="-ml-px w-[18px]">
              <Column groups={ucsGroups} height="h-[299px]" />
            </div>
          </div>
          <div className="w-[23px] border-r border-b border-[#a0a0a0] pb-1">
            <TopGrip />
            <Column groups={drawGroup} height="h-[395px]" />
          </div>
        </aside>

        <section className="flex min-w-0 flex-1 flex-col">
          <div className="relative flex-1 border-b border-l border-[#111] border-l-[#666] bg-[#919191] pt-[46px] pl-[188px]">
            <Sheet />
            <svg viewBox="0 0 38 60" className="absolute bottom-[11px] left-[13px] h-[60px] w-[38px]" fill="none" aria-hidden="true">
              <path d="M3.500 3v54H37z" stroke="#b4b4c4" strokeWidth="1.500" />
              <path d="M2.500 2v54H36zM2.500 48h8v8M20 49l9 8M29 49l-9 8M3 20l3 3 3-3M6 23v4" stroke="#666676" />
            </svg>
          </div>
          <div className="flex h-[19px] shrink-0 items-start">
            {navPaths.map((d, i) => (
              <button key={d} type="button" aria-label={navNames[i]} className="flex h-[14px] w-[17px] items-center justify-center border-r border-[#bbb]">
                <svg viewBox="0 0 10 10" className="size-[9px]" aria-hidden="true">
                  <path d={d} fill="#000" stroke="#000" />
                </svg>
              </button>
            ))}
            <span className="w-1" />
            <TabEdge d="m1 0 5 13.500h1" />
            <button type="button" className="h-[14px] border-b border-[#111]">Модель</button>
            <TabEdge wide d="M0 13.500h2L8 0M4 3l5 10.500h1" fill="M5 0h5v14L5 6z" />
            <button type="button" className="h-[14px] border-b border-[#111] bg-white">На печать А3</button>
            <TabEdge wide d="M0 13.500h2L8 0M4 8l2 5.500h4" fill="M0 0h7L1 14H0z" />
            <button type="button" className="h-[14px] border-b border-[#111]">Layout2</button>
            <TabEdge d="M0 13.500h1L6 0" />
          </div>
        </section>

        <aside className="flex w-[42px] shrink-0 flex-col border-l border-white">
          <div className="ml-[2px] w-[24px] border-r border-b border-[#a0a0a0] pb-[2px]">
            <TopGrip />
            <Column groups={modifyGroup} height="h-[355px]" />
          </div>
          <div className="-mr-2 ml-[27px] mt-1 w-6 border-b border-[#a0a0a0] pb-1">
            <TopGrip />
            <Column groups={[['front', 'back', 'above', 'under']]} height="h-[84px]" />
          </div>
        </aside>
      </main>

      <section className="flex shrink-0 border-y border-[#777] border-t-[#666] bg-[#eeeeee] pb-[2px]">
        <span className="mt-2 mr-[3px] ml-[3px] mb-1 w-[6px] shrink-0 border-x border-[#a5a5a5] bg-white" />
        <div className="mt-[10px] min-w-0 flex-1 border-t-2 border-b border-l border-[#666] border-b-[#999] bg-white font-['Liberation_Mono',monospace] text-[13px] text-[#111]">
          <div className="flex h-[21px] border-b border-[#888]">
            <output className="flex-1 pt-px leading-[14px]">Команда: лист</output>
            <div className="flex w-[11px] flex-col items-center justify-around bg-[#eee]">
              <button type="button" aria-label="Вверх"><svg viewBox="0 0 7 4" className="h-1 w-[7px]"><path d="M0 4h7L3.500 0z" fill="#444" /></svg></button>
              <button type="button" aria-label="Вниз"><svg viewBox="0 0 7 4" className="h-1 w-[7px]"><path d="M0 0h7L3.500 4z" fill="#444" /></svg></button>
            </div>
          </div>
          <div className="flex h-[18px] items-center">
            <label htmlFor="cmd">Команда:</label>
            <input id="cmd" className="min-w-0 flex-1 outline-none" />
            <div className="mr-[13px] flex h-full w-[64px] items-center justify-between bg-[#f0f0f0] px-[6px]">
              <svg viewBox="0 0 4 7" className="h-[7px] w-1" aria-hidden="true"><path d="M4 0v7L0 3.500z" fill="#444" /></svg>
              <span className="mr-4 h-[14px] w-[14px] rounded-xs border border-[#8e8e8e] bg-linear-to-b from-white to-[#cfcfcf]" />
              <svg viewBox="0 0 4 7" className="h-[7px] w-1" aria-hidden="true"><path d="M0 0v7l4-3.500z" fill="#444" /></svg>
            </div>
          </div>
        </div>
      </section>

      <footer className="flex h-[17px] shrink-0 items-start overflow-hidden bg-[#eeeeee] pt-[2px] leading-[16px]">
        <output className="ml-px h-5 w-[128px] shrink-0 border border-[#a0a0a0] pl-px">208.47, 73.49 , 0.00</output>
        <div className="ml-[2px] flex gap-[2px]">
          {modes.map(({ t, on, w }) => (
            <button
              key={t}
              type="button"
              aria-pressed={on}
              className={`flex h-5 shrink-0 justify-center border whitespace-nowrap leading-[17px] ${w} ${on ? 'border-[#222] bg-[#f6f6f6]' : 'border-transparent border-r-[#999]'}`}
            >
              {t}
            </button>
          ))}
        </div>
        <button type="button" aria-label="Назад" className="ml-4 flex h-5 w-[11px] items-start justify-center border border-[#bbb] pt-1">
          <svg viewBox="0 0 4 7" className="h-[7px] w-1"><path d="M4 0v7L0 3.500z" fill="#999" /></svg>
        </button>
        <button type="button" aria-label="Видовой экран" className="flex w-7 justify-center pt-px"><Icon name="viewport" /></button>
        <button type="button" aria-label="Вперёд" className="flex h-5 w-[11px] items-start justify-center border border-[#bbb] pt-1">
          <svg viewBox="0 0 4 7" className="h-[7px] w-1"><path d="M0 0v7l4-3.500z" fill="#999" /></svg>
        </button>
        <div className="-mr-[7px] ml-auto flex">
          <div className="flex h-5 gap-1 border border-[#aaa] px-[2px] pt-px">
            {['tray1', 'tray2', 'tray3', 'tray4'].map((n) => <Icon key={n} name={n} />)}
          </div>
          <button type="button" aria-label="Меню строки состояния" className="flex w-5 justify-center pt-[10px]"><Caret /></button>
          <button type="button" aria-label="Очистить экран"><Icon name="clean" /></button>
        </div>
      </footer>
    </div>
  );
}
